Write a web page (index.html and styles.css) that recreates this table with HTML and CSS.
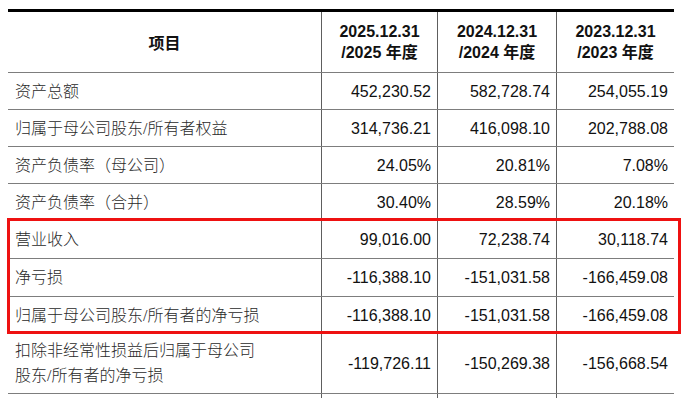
FILE: index.html
```html
<!DOCTYPE html>
<html lang="zh-CN">
<head>
<meta charset="utf-8">
<link rel="stylesheet" href="styles.css">
</head>
<body>
<div class="sheet">
  <div class="row head">
    <div class="cell label-h">项目</div>
    <div class="cell date">2025.12.31<br>/2025 年度</div>
    <div class="cell date">2024.12.31<br>/2024 年度</div>
    <div class="cell date">2023.12.31<br>/2023 年度</div>
  </div>
  <div class="row">
    <div class="cell label">资产总额</div>
    <div class="cell num">452,230.52</div>
    <div class="cell num">582,728.74</div>
    <div class="cell num">254,055.19</div>
  </div>
  <div class="row">
    <div class="cell label">归属于母公司股东/所有者权益</div>
    <div class="cell num">314,736.21</div>
    <div class="cell num">416,098.10</div>
    <div class="cell num">202,788.08</div>
  </div>
  <div class="row">
    <div class="cell label">资产负债率（母公司）</div>
    <div class="cell num">24.05%</div>
    <div class="cell num">20.81%</div>
    <div class="cell num">7.08%</div>
  </div>
  <div class="row">
    <div class="cell label">资产负债率（合并）</div>
    <div class="cell num">30.40%</div>
    <div class="cell num">28.59%</div>
    <div class="cell num">20.18%</div>
  </div>
  <div class="group">
    <div class="row tall">
      <div class="cell label">营业收入</div>
      <div class="cell num">99,016.00</div>
      <div class="cell num">72,238.74</div>
      <div class="cell num">30,118.74</div>
    </div>
    <div class="row tall">
      <div class="cell label">净亏损</div>
      <div class="cell num">-116,388.10</div>
      <div class="cell num">-151,031.58</div>
      <div class="cell num">-166,459.08</div>
    </div>
    <div class="row">
      <div class="cell label">归属于母公司股东/所有者的净亏损</div>
      <div class="cell num">-116,388.10</div>
      <div class="cell num">-151,031.58</div>
      <div class="cell num">-166,459.08</div>
    </div>
  </div>
  <div class="row last">
    <div class="cell label two">扣除非经常性损益后归属于母公司<br>股东/所有者的净亏损</div>
    <div class="cell num">-119,726.11</div>
    <div class="cell num">-150,269.38</div>
    <div class="cell num">-156,668.54</div>
  </div>
  <div class="row tail">
    <div class="cell"></div>
    <div class="cell"></div>
    <div class="cell"></div>
    <div class="cell"></div>
  </div>
</div>
</body>
</html>
```

FILE: styles.css
```css
html, body {
  margin: 0;
  padding: 0;
  background: #ffffff;
}

.sheet {
  width: 666px;
  margin: 9px 0 0 8px;
  border-top: 3px solid #000000;
  font-family: "Liberation Sans", "Noto Sans CJK SC", sans-serif;
  font-size: 16px;
  color: #111111;
}

.row {
  display: grid;
  grid-template-columns: 313px 116px 119px 118px;
  height: 37px;
  box-sizing: border-box;
  border-bottom: 1px solid #7d7d7d;
}

.row.tall {
  height: 38px;
}

.row.head {
  height: 61px;
}

.row.last {
  height: 60px;
}

.row.tail {
  height: 4px;
  border-bottom: none;
}

.cell {
  display: flex;
  align-items: center;
  box-sizing: border-box;
  border-left: 1px solid #5e5e5e;
  line-height: 21px;
}

.cell:first-child {
  border-left: none;
}

.label {
  padding-left: 7px;
  font-family: "Liberation Serif", "Noto Sans CJK SC", serif;
  font-weight: 300;
  color: #2a2a2a;
}

.label.two {
  line-height: 25px;
  padding-bottom: 1px;
}

.label-h {
  justify-content: center;
  font-family: "Noto Sans CJK SC", sans-serif;
  font-weight: 700;
  color: #111111;
}

.date {
  justify-content: center;
  text-align: center;
  font-weight: 700;
  color: #111111;
}

.num {
  justify-content: flex-end;
  padding-right: 6px;
  color: #111111;
}

.group {
  position: relative;
}

.group::after {
  content: "";
  position: absolute;
  top: -3px;
  bottom: 0;
  left: -1px;
  right: -7px;
  border: 3px solid #ee1111;
  pointer-events: none;
}
```
